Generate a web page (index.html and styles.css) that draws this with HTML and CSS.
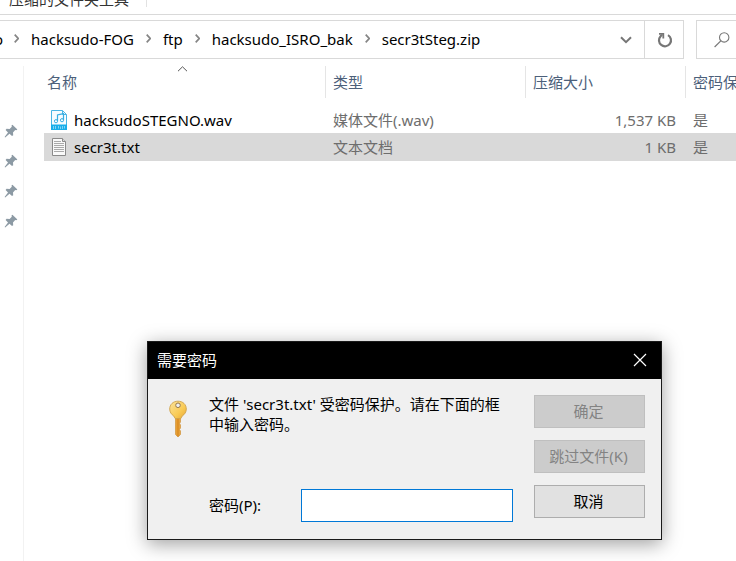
FILE: index.html
```html
<!DOCTYPE html>
<html lang="zh-CN">
<head>
<meta charset="utf-8">
<title>secr3tSteg.zip</title>
<link rel="stylesheet" href="styles.css">
</head>
<body>
<svg class="defs" aria-hidden="true">
  <symbol id="chevron" viewBox="0 0 5 9"><path d="M.7 .7 4.2 4.5 .7 8.3" fill="none" stroke="#858585" stroke-width="1.7"/></symbol>
  <symbol id="pin" viewBox="0 0 14 14"><path d="M8.4 .8 13.4 5.6 12.2 6.3 11.2 6 9 8.4 9.2 11.2 8 12 5.5 9.8 1.2 13.4 .6 12.9 4 8.4 1.6 6 2.6 4.8 5.6 5 7.8 2.8 7.5 1.6Z" fill="#8c9aa4"/></symbol>
</svg>
<header class="ribbon">
  <span class="ribbon-tab">压缩的文件夹工具</span>
  <span class="ribbon-divider"></span>
</header>
<div class="toolbar">
  <nav class="address">
    <div class="crumbs">
      <a class="crumb-cut" href="#">o</a>
      <svg class="chevron"><use href="#chevron"/></svg>
      <a class="crumb" href="#">hacksudo-FOG</a>
      <svg class="chevron"><use href="#chevron"/></svg>
      <a class="crumb" href="#">ftp</a>
      <svg class="chevron"><use href="#chevron"/></svg>
      <a class="crumb" href="#">hacksudo_ISRO_bak</a>
      <svg class="chevron"><use href="#chevron"/></svg>
      <a class="crumb" href="#">secr3tSteg.zip</a>
    </div>
    <button class="icon-button" aria-label="历史记录">
      <svg width="12" height="8" viewBox="0 0 12 8"><path d="M1 1.2 6 6.2 11 1.2" fill="none" stroke="#767676" stroke-width="2"/></svg>
    </button>
    <button class="icon-button refresh" aria-label="刷新">
      <svg width="16" height="16" viewBox="0 0 16 16"><path d="M11 3.1A6 6 0 1 1 3.6 4.2L5 2.8" fill="none" stroke="#767676" stroke-width="2.2"/><path d="M2 1.9H6.3V6.4" fill="none" stroke="#767676" stroke-width="1.8"/></svg>
    </button>
  </nav>
  <button class="search" aria-label="搜索">
    <svg width="16" height="16" viewBox="0 0 16 16"><circle cx="10.2" cy="5.4" r="4.7" fill="none" stroke="#777" stroke-width="1.1"/><path d="M6.8 8.8.6 15" stroke="#777" stroke-width="1.2"/></svg>
  </button>
</div>
<main class="content">
  <aside class="sidebar">
    <svg class="pin"><use href="#pin"/></svg>
    <svg class="pin"><use href="#pin"/></svg>
    <svg class="pin"><use href="#pin"/></svg>
    <svg class="pin"><use href="#pin"/></svg>
  </aside>
  <section class="files">
    <table class="file-table">
      <colgroup><col class="col-name"><col class="col-type"><col class="col-size"><col></colgroup>
      <thead>
        <tr>
          <th><div class="head head-first">名称<svg class="sort" width="11" height="6" viewBox="0 0 11 6"><path d="M1 5.2 5.5 .8 10 5.2" fill="none" stroke="#555"/></svg></div></th>
          <th><div class="head">类型</div></th>
          <th><div class="head">压缩大小</div></th>
          <th><div class="head head-last">密码保护</div></th>
        </tr>
      </thead>
      <tbody>
        <tr>
          <td><div class="file-name">
            <svg width="16" height="20" viewBox="0 0 16 20"><path d="M.5 .5H11.5L15.5 4.5V19.5H.5Z" fill="#f7fcff" stroke="#4bb5e4"/><path d="M11.5 .5V4.5H15.5" fill="none" stroke="#4bb5e4"/><path d="M0 14.5H16V20H0Z" fill="#18aeea"/><path d="M2.5 16V19M4.5 16V19M7.5 16V18.5M9.5 16.5V19M11.5 16V19M13.5 16V18.5" stroke="#7fd3f5"/><path d="M6.5 11V5L12.5 3.6V10" fill="none" stroke="#38aee2" stroke-width="1.2"/><circle cx="5" cy="11.2" r="1.6" fill="none" stroke="#38aee2"/><circle cx="11" cy="10.2" r="1.6" fill="none" stroke="#38aee2"/></svg>
            hacksudoSTEGNO.wav</div></td>
          <td>媒体文件(.wav)</td>
          <td class="size">1,537 KB</td>
          <td>是</td>
        </tr>
        <tr class="selected">
          <td><div class="file-name">
            <svg width="16" height="20" viewBox="0 0 16 20"><path d="M1.5 1.5H11.5L14.5 4.5V18.5H1.5Z" fill="#f9f9f9" stroke="#8a8a8a"/><path d="M11.5 1.5V4.5H14.5" fill="#ddd" stroke="#8a8a8a"/><path d="M3 4.5H10M3 6.5H13M3 8.5H13M3 10.5H13M3 12.5H13M3 14.5H13" stroke="#aaa"/></svg>
            secr3t.txt</div></td>
          <td>文本文档</td>
          <td class="size">1 KB</td>
          <td>是</td>
        </tr>
      </tbody>
    </table>
  </section>
</main>
<form class="dialog" role="dialog" aria-labelledby="dialog-title">
  <div class="titlebar">
    <span id="dialog-title">需要密码</span>
    <button type="button" class="close" aria-label="关闭">
      <svg width="14" height="14" viewBox="0 0 14 14"><path d="M1 1 13 13M13 1 1 13" stroke="#fff" stroke-width="1.2"/></svg>
    </button>
  </div>
  <div class="dialog-body">
    <svg class="key" width="20" height="38" viewBox="0 0 20 38">
      <defs>
        <linearGradient id="gold" x1="0" y1="0" x2="1" y2="1"><stop offset="0" stop-color="#fbe29a"/><stop offset=".6" stop-color="#f9cb56"/><stop offset="1" stop-color="#e9a733"/></linearGradient>
        <linearGradient id="shaft"><stop offset="0" stop-color="#f0ad42"/><stop offset=".5" stop-color="#d98a20"/><stop offset="1" stop-color="#eeb352"/></linearGradient>
      </defs>
      <path d="M7.5 17H12.5V22L11.6 23.5 12.5 25V28L11.5 29.5 12.5 31V34.5L10 37 7.5 34.5Z" fill="url(#shaft)" stroke="#cf9138" stroke-width=".7"/>
      <path d="M10 1.2C15 1.2 18.3 4.6 18.3 9 18.3 12 16.7 14.4 14.2 16L12.8 18.6H7.2L5.8 16C3.3 14.4 1.7 12 1.7 9 1.7 4.6 5 1.2 10 1.2Z" fill="url(#gold)" stroke="#cfa34c" stroke-width=".9"/>
      <circle cx="10" cy="5.3" r="2.3" fill="#efefef" stroke="#96794b"/>
    </svg>
    <p class="message">文件 'secr3t.txt' 受密码保护。请在下面的框中输入密码。</p>
    <div class="field">
      <label for="password">密码(P):</label>
      <input id="password" type="password">
    </div>
    <div class="actions">
      <button type="submit" disabled>确定</button>
      <button type="button" disabled>跳过文件(K)</button>
      <button type="button">取消</button>
    </div>
  </div>
</form>
</body>
</html>
```
FILE: styles.css
```css
* { box-sizing: border-box; }

body {
  margin: 0;
  min-height: 100vh;
  display: flex;
  flex-direction: column;
  position: relative;
  overflow: hidden;
  background: #fff;
  color: #000;
  font: 15px/20px "Noto Sans", "Noto Sans CJK SC", sans-serif;
}

button, input { font: inherit; color: inherit; }
svg { display: block; flex: none; }
.defs { position: absolute; width: 0; height: 0; }

.ribbon {
  display: flex;
  align-items: flex-end;
  height: 15px;
  padding: 0 0 5px 9px;
  border-bottom: 1px solid #d9d9d9;
  color: #333;
}
.ribbon-tab { margin-right: 17px; }
.ribbon-divider { width: 1px; height: 7px; margin-bottom: 2px; background: #e2e2e2; }

.toolbar {
  display: flex;
  gap: 12px;
  height: 39px;
  margin-top: 5px;
}
.address {
  flex: 1;
  display: flex;
  border: 1px solid #d9d9d9;
  border-left: 0;
}
.crumbs {
  flex: 1;
  display: flex;
  align-items: center;
  gap: 11px;
  min-width: 0;
  padding-bottom: 2px;
}
.crumb, .crumb-cut { color: #000; text-decoration: none; white-space: nowrap; }
.crumb { padding: 0 1px; }
.crumb-cut {
  display: flex;
  justify-content: flex-end;
  width: 3px;
  overflow: hidden;
}
.chevron { width: 5px; height: 9px; }
.icon-button, .search, .close {
  display: flex;
  align-items: center;
  justify-content: center;
  padding: 0;
  border: 0;
  background: none;
}
.icon-button { width: 36px; }
.refresh { width: 39px; padding-left: 2px; border-left: 1px solid #d9d9d9; }
.search {
  justify-content: flex-start;
  width: 40px;
  padding-left: 17px;
  border: 1px solid #d9d9d9;
  border-right: 0;
}

.content {
  flex: 1;
  display: flex;
  margin-top: 7px;
}
.sidebar {
  width: 24px;
  padding: 58px 0 0 4px;
  border-right: 1px solid #f2f2f2;
  display: flex;
  flex-direction: column;
  gap: 16px;
}
.pin { width: 14px; height: 14px; }
.files { flex: 1; min-width: 0; padding-left: 20px; }

.file-table {
  width: 100%;
  table-layout: fixed;
  border-collapse: collapse;
  white-space: nowrap;
  color: #6d6d6d;
}
.col-name { width: 282px; }
.col-type { width: 200px; }
.col-size { width: 160px; }
th { padding: 0 0 8px; text-align: left; font-weight: 400; overflow: hidden; }
.head {
  position: relative;
  height: 32px;
  padding: 6px 7px;
  border-right: 1px solid #e5e5e5;
  color: #4c607a;
}
.head-first { padding-left: 3px; }
.head-last { border-right: 0; }
.sort { position: absolute; top: 0; left: 133px; }
td { height: 27px; padding: 0 7px; overflow: hidden; }
.file-name { display: flex; align-items: center; gap: 7px; color: #000; }
.size { padding-right: 10px; text-align: right; }
.selected { background: #d9d9d9; }
.selected td { height: 28px; }

.dialog {
  position: absolute;
  top: 341px;
  left: 147px;
  right: 74px;
  border: 1px solid #1a1a1a;
  background: #f0f0f0;
  box-shadow: 0 4px 18px rgba(0, 0, 0, .38);
}
.titlebar {
  display: flex;
  align-items: center;
  justify-content: space-between;
  height: 37px;
  padding: 0 14px 2px 9px;
  background: #000;
  color: #fff;
}
.dialog-body {
  display: grid;
  grid-template-columns: 40px minmax(0, 1fr) 111px;
  grid-template-rows: 1fr auto;
  column-gap: 21px;
  padding: 15px 16px 17px 0;
}
.key { margin: 6px 0 0 20px; }
.message { margin: 0; }
.field {
  grid-column: 2;
  display: flex;
  align-items: center;
}
.field label { width: 92px; padding-bottom: 2px; }
.field input {
  flex: 1;
  min-width: 0;
  height: 33px;
  padding: 0 6px;
  border: 1px solid #0078d7;
  outline: 0;
  background: #fff;
}
.actions {
  grid-column: 3;
  grid-row: 1 / 3;
  display: flex;
  flex-direction: column;
  gap: 12px;
  padding: 1px 0 4px;
}
.actions button {
  height: 33px;
  padding: 0 2px 2px 0;
  border: 1px solid #adadad;
  background: #e1e1e1;
}
.actions button:disabled {
  border-color: #bfbfbf;
  background: #ccc;
  color: #838383;
}
```
